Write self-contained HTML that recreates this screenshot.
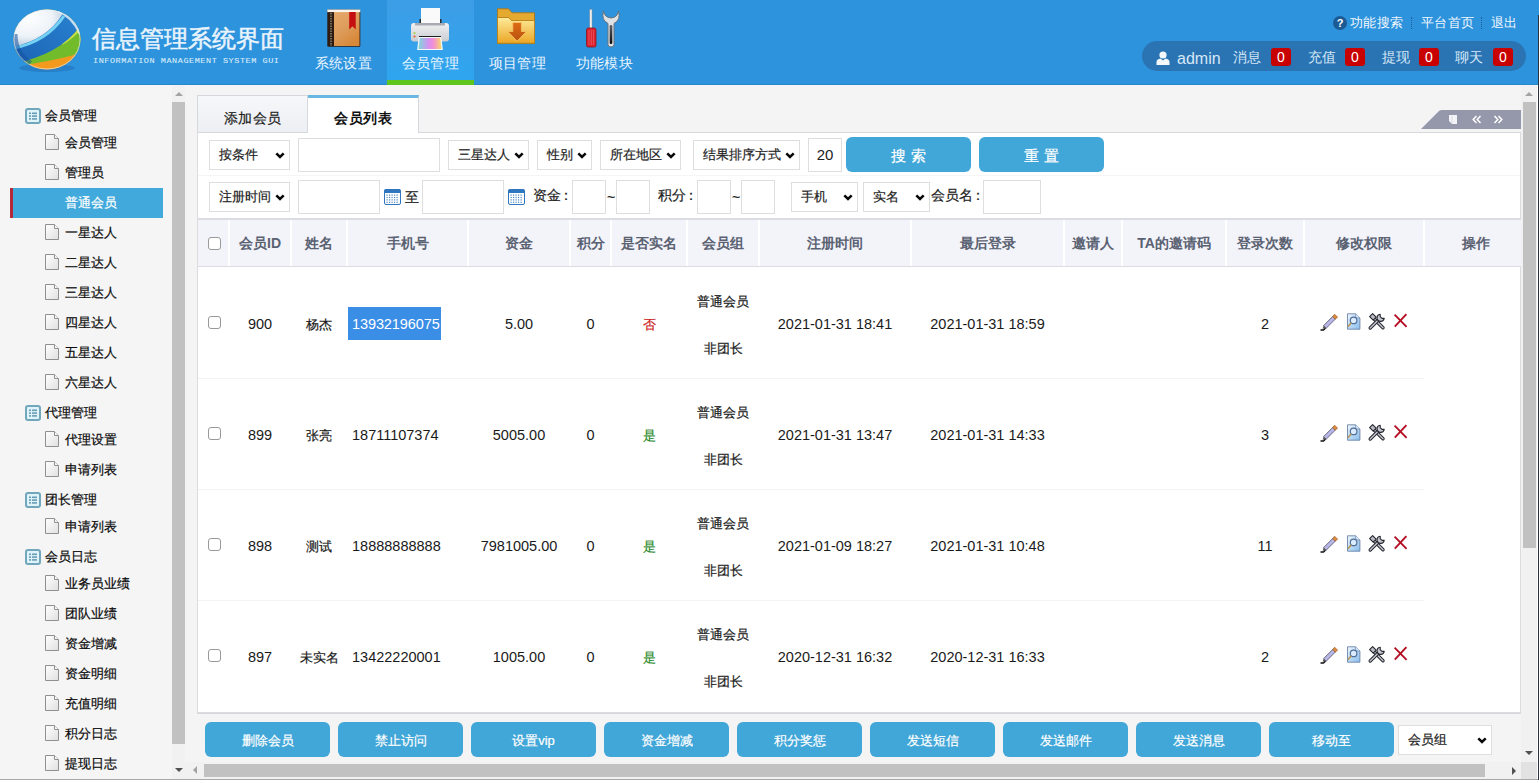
<!DOCTYPE html>
<html><head><meta charset="utf-8">
<style>
*{margin:0;padding:0;box-sizing:border-box}
html,body{width:1539px;height:783px;overflow:hidden;background:#fff;font-family:"Liberation Sans",sans-serif;color:#222}
.a{position:absolute}
.grp,.itm,.on2,.sel,.btn,.cj{-webkit-text-stroke:0.2px currentColor}
#hdr{left:0;top:0;width:1539px;height:85px;background:#2e93dd;border-bottom:1px solid #2a86cc}
.nav{top:0;width:87px;height:85px;text-align:center;color:#eaf6ff;font-size:14px;letter-spacing:0.4px}
.nav .lb{position:absolute;left:0;width:87px;top:55px;line-height:16px;white-space:nowrap}
.nav.on{background:linear-gradient(#3d9de6,#2ea6f0)}
.nav.on:after{content:"";position:absolute;left:0;bottom:0;width:87px;height:5px;background:#5ec51c}
.tl{top:14px;font-size:13px;letter-spacing:0.4px;line-height:18px;color:#f2f8fd;white-space:nowrap}
.pt{top:48px;font-size:14px;line-height:18px;color:#d6e8f6;white-space:nowrap}
.badge{top:48px;width:20px;height:18px;background:#c90000;border-radius:3px;color:#fff;font-size:14px;text-align:center;line-height:18px}
#side{left:0;top:85px;width:172px;height:694px;background:#f5f5f5}
.grp{position:absolute;left:25px;height:24px;font-size:13px;color:#0a0a0a;line-height:24px;padding-left:20px;white-space:nowrap}
.itm{position:absolute;left:45px;height:30px;font-size:13px;color:#0a0a0a;line-height:30px;padding-left:20px;white-space:nowrap}
.on2{position:absolute;left:10px;width:153px;height:30px;background:#41a9dc;border-left:3px solid #b22a3a;color:#fff;font-size:13px;line-height:30px;padding-left:52px}
#main{left:185px;top:85px;width:1352px;height:694px;background:#f4f4f4}
.sel{background:#fff;border:1px solid #dedede;font-size:13px;color:#222;padding-left:9px;white-space:nowrap}
.inp{background:#fff;border:1px solid #dedede;font-size:15px;color:#222;text-align:center}
.btn{background:#41a6d8;border-radius:6px;color:#fff;text-align:center}
.th{font-size:14px;font-weight:bold;color:#5a6272;text-align:center;line-height:47px;white-space:nowrap}
.td{font-size:14.5px;color:#1a1a1a;text-align:center;white-space:nowrap}
.cb{position:absolute;left:10px;width:13px;height:13px;border:1px solid #999;border-radius:3px;background:#fff}
</style></head>
<body>

<svg width="0" height="0" style="position:absolute">
<defs>
 <linearGradient id="dg" x1="0" y1="0" x2="1" y2="1"><stop offset="0" stop-color="#fff"/><stop offset="1" stop-color="#e0e0e0"/></linearGradient>
 <symbol id="doc" viewBox="0 0 15 16"><path d="M0.5 0.5 h9 l4 4 v11 h-13z" fill="url(#dg)" stroke="#909090" stroke-width="1"/><path d="M9.5 0.5 v4 h4" fill="#f8f8f8" stroke="#909090" stroke-width="1"/></symbol>
 <symbol id="grp" viewBox="0 0 16 16"><rect x="1" y="1" width="14" height="14" rx="2" fill="#def3fa" stroke="#72a6bc" stroke-width="2"/><rect x="4" y="4.5" width="2" height="1.6" fill="#6a9cb4"/><rect x="7" y="4.5" width="5" height="1.6" fill="#6a9cb4"/><rect x="4" y="7.3" width="2" height="1.6" fill="#6a9cb4"/><rect x="7" y="7.3" width="5" height="1.6" fill="#6a9cb4"/><rect x="4" y="10.1" width="2" height="1.6" fill="#6a9cb4"/><rect x="7" y="10.1" width="5" height="1.6" fill="#6a9cb4"/></symbol>
 <symbol id="chev" viewBox="0 0 10 7"><path d="M1.3 1.3 L5 5 L8.7 1.3" fill="none" stroke="#0a0a0a" stroke-width="2.5"/></symbol>
 <symbol id="cal" viewBox="0 0 17 17"><rect x="0.5" y="1.5" width="16" height="15" rx="1.5" fill="#fff" stroke="#2f76c0"/><rect x="0.5" y="1.5" width="16" height="3.5" fill="#2f76c0"/><rect x="2.5" y="6.5" width="1.2" height="1.2" fill="#4a86c4"/><rect x="5.0" y="6.5" width="1.2" height="1.2" fill="#4a86c4"/><rect x="7.5" y="6.5" width="1.2" height="1.2" fill="#4a86c4"/><rect x="10.0" y="6.5" width="1.2" height="1.2" fill="#4a86c4"/><rect x="12.5" y="6.5" width="1.2" height="1.2" fill="#4a86c4"/><rect x="2.5" y="8.9" width="1.2" height="1.2" fill="#4a86c4"/><rect x="5.0" y="8.9" width="1.2" height="1.2" fill="#4a86c4"/><rect x="7.5" y="8.9" width="1.2" height="1.2" fill="#4a86c4"/><rect x="10.0" y="8.9" width="1.2" height="1.2" fill="#4a86c4"/><rect x="12.5" y="8.9" width="1.2" height="1.2" fill="#4a86c4"/><rect x="2.5" y="11.3" width="1.2" height="1.2" fill="#4a86c4"/><rect x="5.0" y="11.3" width="1.2" height="1.2" fill="#4a86c4"/><rect x="7.5" y="11.3" width="1.2" height="1.2" fill="#4a86c4"/><rect x="10.0" y="11.3" width="1.2" height="1.2" fill="#4a86c4"/><rect x="12.5" y="11.3" width="1.2" height="1.2" fill="#4a86c4"/><rect x="2.5" y="13.7" width="1.2" height="1.2" fill="#4a86c4"/><rect x="5.0" y="13.7" width="1.2" height="1.2" fill="#4a86c4"/><rect x="7.5" y="13.7" width="1.2" height="1.2" fill="#4a86c4"/><rect x="10.0" y="13.7" width="1.2" height="1.2" fill="#4a86c4"/><rect x="12.5" y="13.7" width="1.2" height="1.2" fill="#4a86c4"/></symbol>
 <symbol id="icons" viewBox="0 0 90 18">
<defs><linearGradient id="dq" x1="0" y1="0" x2="1" y2="1"><stop offset="0" stop-color="#f2f8fe"/><stop offset="1" stop-color="#86bcec"/></linearGradient></defs>
<path d="M3.6 12.6 L13.2 3 L15.8 5.6 L6.2 15.2Z" fill="#b8b6e4" stroke="#4c4c6c" stroke-width="0.8"/>
<path d="M12.6 3.6 L14.6 1.2 L17.6 4.2 L15.2 6.2Z" fill="#de8a3c" stroke="#8a5020" stroke-width="0.6"/>
<path d="M3.6 12.6 L2.6 15.8 L6.2 15.2Z" fill="#606060"/>
<path d="M0.5 17 L3.5 17 L5.5 15.2" fill="none" stroke="#111" stroke-width="1.3"/>
<path d="M27.5 0.8 h8.2 l4.2 4.2 v11.2 h-12.4z" fill="url(#dq)" stroke="#6c84a8" stroke-width="0.9"/>
<path d="M35.7 0.8 v4.2 h4.2" fill="#dceafa" stroke="#6c84a8" stroke-width="0.7"/>
<circle cx="33.6" cy="7.4" r="3.3" fill="#dcecfc" stroke="#50709c" stroke-width="1.2"/>
<path d="M31.2 9.8 L28 13.8" stroke="#b89858" stroke-width="1.6"/>
<path d="M63 14.8 L53.5 5.3" stroke="#26262e" stroke-width="3.4" stroke-linecap="round"/>
<path d="M63 14.8 L53.5 5.3" stroke="#c4c6d0" stroke-width="1.4" stroke-linecap="round"/>
<path d="M49.6 3.6 L52.6 0.6 L56.2 4.2 L53.2 7.2z" fill="#b8bac4" stroke="#26262e" stroke-width="1.1" stroke-linejoin="round"/>
<path d="M50.2 15 L59 6.2" stroke="#26262e" stroke-width="3.4" stroke-linecap="round"/>
<path d="M50.2 15 L59 6.2" stroke="#c4c6d0" stroke-width="1.4" stroke-linecap="round"/>
<path d="M60.2 1.2 A3.6 3.6 0 1 0 64.2 5.4 L62 5.4 L60.2 3.6z" fill="#c4c6d0" stroke="#26262e" stroke-width="1.1" stroke-linejoin="round"/>
<path d="M74.6 1.6 L86.6 13.8" stroke="#b40e22" stroke-width="1.9"/>
<path d="M86.4 1.2 L74.8 13.6" stroke="#b40e22" stroke-width="1.9"/>
</symbol>
</defs>
</svg>

<div id="hdr" class="a">

  <svg class="a" style="left:0;top:0" width="90" height="80" viewBox="0 0 90 80">
    <defs>
      <clipPath id="gc"><ellipse cx="47" cy="39.5" rx="33.5" ry="30"/></clipPath>
      <radialGradient id="gw" cx="45%" cy="35%" r="65%"><stop offset="0" stop-color="#ffffff"/><stop offset="0.6" stop-color="#eef3f8"/><stop offset="1" stop-color="#b4c8dc"/></radialGradient>
      <linearGradient id="gb" x1="0" y1="1" x2="1" y2="0"><stop offset="0" stop-color="#1a5fb0"/><stop offset="1" stop-color="#2a86d4"/></linearGradient>
    </defs>
    <ellipse cx="47" cy="68" rx="28" ry="4" fill="#1f69b0" opacity=".45"/>
    <g clip-path="url(#gc)">
      <rect x="0" y="0" width="90" height="80" fill="#f39a1e"/>
      <path d="M0 68 Q55 62 90 50 V0 H0Z" fill="#72bc2c"/>
      <path d="M62 44 Q72 38 79 30" stroke="#c8e040" stroke-width="2" fill="none"/>
      <path d="M0 66 Q58 58 80 26 L75 0 H0Z" fill="url(#gb)"/>
      <path d="M8 49 Q45 44 64 16" stroke="#74d2f4" stroke-width="3" fill="none"/>
      <path d="M0 49 Q44 44 62 15 L60 0 H0Z" fill="url(#gw)"/>
      <path d="M14 34 Q14 54 30 64" stroke="#1450a0" stroke-width="7" fill="none" opacity=".55"/>
      <path d="M58 11 Q72 16 80 34" stroke="#e4eef6" stroke-width="2.5" fill="none" opacity=".8"/>
    </g>
    <ellipse cx="47" cy="39.5" rx="33" ry="29.5" fill="none" stroke="#e8f2fa" stroke-width="1" opacity=".6"/>
  </svg>
<div class="a" style="left:92px;top:23px;font-size:24px;line-height:32px;color:#e9f4fc;-webkit-text-stroke:0.5px #e9f4fc;white-space:nowrap">信息管理系统界面</div>
<div class="a" style="left:93px;top:57px;font-size:8.5px;line-height:9px;color:#d8ecfa;letter-spacing:0.55px;font-family:'Liberation Mono',monospace;white-space:nowrap;transform:scaleY(0.85);transform-origin:0 100%;-webkit-text-stroke:0.1px #d8ecfa">INFORMATION MANAGEMENT SYSTEM GUI</div>

  <div class="a nav" style="left:300px">
    <svg class="a" style="left:26px;top:8px" width="36" height="40" viewBox="0 0 36 40">
      <defs><linearGradient id="bk" x1="0" y1="0" x2="0.6" y2="1"><stop offset="0" stop-color="#e6aa6c"/><stop offset=".6" stop-color="#dc9a58"/><stop offset="1" stop-color="#d88838"/></linearGradient></defs>
      <rect x="1.3" y="1.5" width="33" height="37.3" rx="1" fill="#2e1c10"/>
      <rect x="8" y="4" width="25.5" height="34" fill="url(#bk)"/>
      <rect x="1.3" y="1.5" width="33" height="2.6" fill="#fbf4ec"/>
      <line x1="5" y1="5" x2="5" y2="38" stroke="#e4dcd0" stroke-width="0.8" stroke-dasharray="1.5 1"/>
      <path d="M23.2 4 h6.5 v17.5 l-3.25 -3.2 l-3.25 3.2z" fill="#c40e10"/>
    </svg>
    <div class="lb">系统设置</div>
  </div>
  <div class="a nav on" style="left:387px">
    <svg class="a" style="left:22px;top:6px" width="42" height="46" viewBox="0 0 42 46">
      <defs><linearGradient id="pr" x1="0" y1="0" x2="0" y2="1"><stop offset="0" stop-color="#f2f2f2"/><stop offset="1" stop-color="#c8ccd2"/></linearGradient>
      <linearGradient id="rb" x1="0" x2="1"><stop offset="0" stop-color="#78dcd8"/><stop offset=".45" stop-color="#d890f0"/><stop offset=".65" stop-color="#f490d0"/><stop offset="1" stop-color="#f8e060"/></linearGradient></defs>
      <rect x="10.5" y="13" width="22" height="5" fill="#2a2a2a"/>
      <rect x="12" y="2" width="19" height="15.5" fill="#fafafa"/>
      <rect x="2" y="17" width="38" height="18.5" rx="3" fill="url(#pr)"/>
      <rect x="6" y="17" width="30" height="2.5" fill="#a8acb2"/>
      <circle cx="5.5" cy="27" r="1.1" fill="#a8cc40"/><circle cx="5.5" cy="30.5" r="1.1" fill="#e06030"/>
      <rect x="10" y="30" width="22" height="1.8" fill="#1e1e1e"/>
      <path d="M10.2 31.5 L31.8 31.5 L33.2 43.5 L8.8 43.5Z" fill="url(#rb)" stroke="#f4f8fc" stroke-width="1.2"/>
    </svg>
    <div class="lb">会员管理</div>
  </div>
  <div class="a nav" style="left:474px">
    <svg class="a" style="left:22px;top:7px" width="42" height="40" viewBox="0 0 42 40">
      <defs><linearGradient id="fd" x1="0" y1="0" x2="0" y2="1"><stop offset="0" stop-color="#feea9a"/><stop offset="1" stop-color="#eba625"/></linearGradient>
      <linearGradient id="fa" x1="0" y1="0" x2="0" y2="1"><stop offset="0" stop-color="#de6c14"/><stop offset="1" stop-color="#b85010"/></linearGradient></defs>
      <path d="M1.5 1.8 h11 l3.5 4 h22.5 v30.5 h-37z" fill="#e4aa30" stroke="#a87618" stroke-width="0.9"/>
      <path d="M1.5 10.5 h11 l3 3 h23 v22.8 h-37z" fill="url(#fd)" stroke="#b88018" stroke-width="0.9"/>
      <path d="M16.8 15.5 h8.6 v9 h5 l-9.3 9.6 l-9.3 -9.6 h5z" fill="url(#fa)" stroke="#f6c868" stroke-width="0.8"/>
    </svg>
    <div class="lb">项目管理</div>
  </div>
  <div class="a nav" style="left:561px">
    <svg class="a" style="left:23px;top:8px" width="40" height="42" viewBox="0 0 40 42">
      <defs><linearGradient id="ws" x1="0" y1="0" x2="0" y2="1"><stop offset="0" stop-color="#5a6068"/><stop offset="1" stop-color="#0a0a0a"/></linearGradient></defs>
      <rect x="5.8" y="1.5" width="2.2" height="19" fill="#f2f2f2" stroke="#8a9098" stroke-width="0.5"/>
      <path d="M2.5 22 q0 -2 2 -2 h5.5 q2 0 2 2 v15.5 q0 1.5 -2 1.5 h-5.5 q-2 0 -2 -1.5z" fill="#dc2430" stroke="#8a1418" stroke-width="0.8"/>
      <path d="M5 22 v15 M7.3 22 v15 M9.6 22 v15" stroke="#f06068" stroke-width="0.7"/>
      <path d="M19.5 3 Q17 12 24 15.5 L24 36.5 Q24 39 27 39 Q30 39 30 36.5 L30 15.5 Q37 12 34.5 3 Q33.5 9.5 27 10 Q20.5 9.5 19.5 3Z" fill="#dde2e6" stroke="#6a727a" stroke-width="1"/>
      <rect x="25.7" y="17" width="2.6" height="19" rx="1.2" fill="url(#ws)"/>
    </svg>
    <div class="lb">功能模块</div>
  </div>
<div class="a" style="left:1333px;top:16px;width:14px;height:14px;border-radius:7px;background:#1c5a94;color:#fff;font-size:11px;font-weight:bold;text-align:center;line-height:14px">?</div>
<div class="a tl" style="left:1350px">功能搜索</div>
<div class="a" style="left:1411px;top:17px;width:1px;height:12px;border-left:1px dotted #1f5f99"></div>
<div class="a tl" style="left:1421px">平台首页</div>
<div class="a" style="left:1481px;top:17px;width:1px;height:12px;border-left:1px dotted #1f5f99"></div>
<div class="a tl" style="left:1491px">退出</div>
<div class="a" style="left:1142px;top:41px;width:384px;height:30px;border-radius:15px;background:#2a74b4"></div>
<svg class="a" style="left:1156px;top:51px" width="14" height="14" viewBox="0 0 14 14"><circle cx="7" cy="4" r="3.6" fill="#f4f8fb"/><path d="M0.5 14 v-3 q0 -3 4 -3.5 l2.5 2 l2.5 -2 q4 0.5 4 3.5 v3z" fill="#f4f8fb"/></svg>
<div class="a" style="left:1177px;top:49px;font-size:16px;line-height:20px;color:#d6e8f6">admin</div>
<div class="a pt" style="left:1233px">消息</div>
<div class="a pt" style="left:1308px">充值</div>
<div class="a pt" style="left:1382px">提现</div>
<div class="a pt" style="left:1455px">聊天</div>
<div class="a badge" style="left:1271px">0</div>
<div class="a badge" style="left:1345px">0</div>
<div class="a badge" style="left:1419px">0</div>
<div class="a badge" style="left:1493px">0</div>
</div>
<div id="side" class="a">
<div class="grp" style="top:19px"><svg class="a" style="left:0;top:4px" width="16" height="16"><use href="#grp"/></svg>会员管理</div>
<div class="itm" style="top:43px"><svg class="a" style="left:0;top:6px" width="15" height="16"><use href="#doc"/></svg>会员管理</div>
<div class="itm" style="top:73px"><svg class="a" style="left:0;top:6px" width="15" height="16"><use href="#doc"/></svg>管理员</div>
<div class="on2" style="top:103px">普通会员</div>
<div class="itm" style="top:133px"><svg class="a" style="left:0;top:6px" width="15" height="16"><use href="#doc"/></svg>一星达人</div>
<div class="itm" style="top:163px"><svg class="a" style="left:0;top:6px" width="15" height="16"><use href="#doc"/></svg>二星达人</div>
<div class="itm" style="top:193px"><svg class="a" style="left:0;top:6px" width="15" height="16"><use href="#doc"/></svg>三星达人</div>
<div class="itm" style="top:223px"><svg class="a" style="left:0;top:6px" width="15" height="16"><use href="#doc"/></svg>四星达人</div>
<div class="itm" style="top:253px"><svg class="a" style="left:0;top:6px" width="15" height="16"><use href="#doc"/></svg>五星达人</div>
<div class="itm" style="top:283px"><svg class="a" style="left:0;top:6px" width="15" height="16"><use href="#doc"/></svg>六星达人</div>
<div class="grp" style="top:316px"><svg class="a" style="left:0;top:4px" width="16" height="16"><use href="#grp"/></svg>代理管理</div>
<div class="itm" style="top:340px"><svg class="a" style="left:0;top:6px" width="15" height="16"><use href="#doc"/></svg>代理设置</div>
<div class="itm" style="top:370px"><svg class="a" style="left:0;top:6px" width="15" height="16"><use href="#doc"/></svg>申请列表</div>
<div class="grp" style="top:403px"><svg class="a" style="left:0;top:4px" width="16" height="16"><use href="#grp"/></svg>团长管理</div>
<div class="itm" style="top:427px"><svg class="a" style="left:0;top:6px" width="15" height="16"><use href="#doc"/></svg>申请列表</div>
<div class="grp" style="top:460px"><svg class="a" style="left:0;top:4px" width="16" height="16"><use href="#grp"/></svg>会员日志</div>
<div class="itm" style="top:484px"><svg class="a" style="left:0;top:6px" width="15" height="16"><use href="#doc"/></svg>业务员业绩</div>
<div class="itm" style="top:514px"><svg class="a" style="left:0;top:6px" width="15" height="16"><use href="#doc"/></svg>团队业绩</div>
<div class="itm" style="top:544px"><svg class="a" style="left:0;top:6px" width="15" height="16"><use href="#doc"/></svg>资金增减</div>
<div class="itm" style="top:574px"><svg class="a" style="left:0;top:6px" width="15" height="16"><use href="#doc"/></svg>资金明细</div>
<div class="itm" style="top:604px"><svg class="a" style="left:0;top:6px" width="15" height="16"><use href="#doc"/></svg>充值明细</div>
<div class="itm" style="top:634px"><svg class="a" style="left:0;top:6px" width="15" height="16"><use href="#doc"/></svg>积分日志</div>
<div class="itm" style="top:664px"><svg class="a" style="left:0;top:6px" width="15" height="16"><use href="#doc"/></svg>提现日志</div>
<div class="a" style="left:172px;top:0;width:13px;height:694px;background:#f1f1f1"></div>
<div class="a" style="left:172px;top:17px;width:13px;height:642px;background:#c1c1c1"></div>
<div class="a" style="left:175px;top:7px;width:0;height:0;border-left:4px solid transparent;border-right:4px solid transparent;border-bottom:4px solid #a3a3a3"></div>
<div class="a" style="left:175px;top:683px;width:0;height:0;border-left:4px solid transparent;border-right:4px solid transparent;border-top:4px solid #505050"></div>

</div>
<div id="main" class="a">
<div class="a" style="left:12px;top:10px;width:1324px;height:618px;background:#fff;border:1px solid #dcdce0;border-top:none"></div>
<div class="a" style="left:12px;top:10px;width:1324px;height:38px;background:#f4f4f5;border-bottom:1px solid #d8d8dc"></div>
<div class="a" style="left:12px;top:10px;width:111px;height:37px;background:linear-gradient(#f6f7f9,#eceff3);border:1px solid #d6d8de;border-bottom:none;font-size:14px;letter-spacing:0.5px;color:#222;text-align:center;line-height:44px;-webkit-text-stroke:0.2px #222">添加会员</div>
<div class="a" style="left:123px;top:10px;width:111px;height:38px;background:#fff;border-right:1px solid #d6d8de;border-top:3px solid #6ab8e2;font-size:14px;letter-spacing:0.5px;font-weight:bold;color:#111;text-align:center;line-height:40px">会员列表</div>
<svg class="a" style="left:1236px;top:25px" width="100" height="19" viewBox="0 0 100 19"><path d="M0 19 L18 1 Q19 0 21 0 H100 V19Z" fill="#9498aa"/><rect x="28" y="5" width="8" height="9" fill="#f4f4f8"/><path d="M28 11 l3 3 h-3z" fill="#9498aa"/><path d="M31 6 v7" stroke="#c8cad4" stroke-width="0.6"/><path d="M55.5 6 L52.2 9.5 L55.5 13 M59.5 6 L56.2 9.5 L59.5 13 M73.5 6 L76.8 9.5 L73.5 13 M77.5 6 L80.8 9.5 L77.5 13" fill="none" stroke="#fff" stroke-width="1.5"/></svg>
<div class="a" style="left:13px;top:90px;width:1322px;height:1px;background:#f5f5f5"></div>
<div class="a sel" style="left:24px;top:55px;width:81px;height:30px;line-height:28px">按条件<svg class="a" style="left:65px;top:11px" width="10" height="7"><use href="#chev"/></svg></div>
<div class="a inp" style="left:113px;top:53px;width:142px;height:34px;line-height:32px"></div>
<div class="a sel" style="left:263px;top:55px;width:81px;height:30px;line-height:28px">三星达人<svg class="a" style="left:65px;top:11px" width="10" height="7"><use href="#chev"/></svg></div>
<div class="a sel" style="left:352px;top:55px;width:55px;height:30px;line-height:28px">性别<svg class="a" style="left:39px;top:11px" width="10" height="7"><use href="#chev"/></svg></div>
<div class="a sel" style="left:415px;top:55px;width:81px;height:30px;line-height:28px">所在地区<svg class="a" style="left:65px;top:11px" width="10" height="7"><use href="#chev"/></svg></div>
<div class="a sel" style="left:508px;top:55px;width:107px;height:30px;line-height:28px">结果排序方式<svg class="a" style="left:91px;top:11px" width="10" height="7"><use href="#chev"/></svg></div>
<div class="a inp" style="left:623px;top:53px;width:34px;height:34px;line-height:32px">20</div>
<div class="a btn" style="left:661px;top:52px;width:125px;height:35px;font-size:15px;line-height:37px">搜 索</div>
<div class="a btn" style="left:794px;top:52px;width:125px;height:35px;font-size:15px;line-height:37px">重 置</div>
<div class="a sel" style="left:24px;top:97px;width:81px;height:30px;line-height:28px">注册时间<svg class="a" style="left:65px;top:11px" width="10" height="7"><use href="#chev"/></svg></div>
<div class="a inp" style="left:113px;top:95px;width:82px;height:34px;line-height:32px"></div>
<svg class="a" style="left:199px;top:103px" width="17" height="17"><use href="#cal"/></svg>
<div class="a cj" style="left:220px;top:103px;font-size:14px;color:#222;white-space:nowrap;line-height:18px;">至</div>
<div class="a inp" style="left:237px;top:95px;width:82px;height:34px;line-height:32px"></div>
<svg class="a" style="left:323px;top:103px" width="17" height="17"><use href="#cal"/></svg>
<div class="a cj" style="left:348px;top:101px;font-size:14px;color:#222;white-space:nowrap;line-height:18px;">资金<span style="margin-left:-2px">：</span></div>
<div class="a inp" style="left:387px;top:95px;width:34px;height:34px;line-height:32px"></div>
<div class="a cj" style="left:422px;top:103px;font-size:14px;color:#222;white-space:nowrap;line-height:18px;">~</div>
<div class="a inp" style="left:431px;top:95px;width:34px;height:34px;line-height:32px"></div>
<div class="a cj" style="left:473px;top:101px;font-size:14px;color:#222;white-space:nowrap;line-height:18px;">积分<span style="margin-left:-2px">：</span></div>
<div class="a inp" style="left:512px;top:95px;width:34px;height:34px;line-height:32px"></div>
<div class="a cj" style="left:547px;top:103px;font-size:14px;color:#222;white-space:nowrap;line-height:18px;">~</div>
<div class="a inp" style="left:556px;top:95px;width:34px;height:34px;line-height:32px"></div>
<div class="a sel" style="left:606px;top:97px;width:67px;height:30px;line-height:28px">手机<svg class="a" style="left:51px;top:11px" width="10" height="7"><use href="#chev"/></svg></div>
<div class="a sel" style="left:678px;top:97px;width:67px;height:30px;line-height:28px">实名<svg class="a" style="left:51px;top:11px" width="10" height="7"><use href="#chev"/></svg></div>
<div class="a cj" style="left:746px;top:101px;font-size:14px;color:#222;white-space:nowrap;line-height:18px;">会员名<span style="margin-left:-2px">：</span></div>
<div class="a inp" style="left:798px;top:95px;width:58px;height:34px;line-height:32px"></div>
<div class="a" style="left:13px;top:133px;width:1323px;height:2px;background:#dcdce2"></div>
<div class="a" style="left:13px;top:135px;width:1323px;height:47px;background:#f3f3fa;border-bottom:1px solid #dcdce2"></div>
<div class="a" style="left:13px;top:135px;width:31px;height:47px;"><div class="cb" style="top:17px"></div></div>
<div class="a" style="left:43px;top:135px;width:2px;height:46px;background:#fff"></div>
<div class="a th" style="left:44px;top:135px;width:62px;height:47px;">会员ID</div>
<div class="a" style="left:105px;top:135px;width:2px;height:46px;background:#fff"></div>
<div class="a th" style="left:106px;top:135px;width:56px;height:47px;">姓名</div>
<div class="a" style="left:161px;top:135px;width:2px;height:46px;background:#fff"></div>
<div class="a th" style="left:162px;top:135px;width:121px;height:47px;">手机号</div>
<div class="a" style="left:282px;top:135px;width:2px;height:46px;background:#fff"></div>
<div class="a th" style="left:283px;top:135px;width:102px;height:47px;">资金</div>
<div class="a" style="left:384px;top:135px;width:2px;height:46px;background:#fff"></div>
<div class="a th" style="left:385px;top:135px;width:41px;height:47px;">积分</div>
<div class="a" style="left:425px;top:135px;width:2px;height:46px;background:#fff"></div>
<div class="a th" style="left:426px;top:135px;width:76px;height:47px;">是否实名</div>
<div class="a" style="left:501px;top:135px;width:2px;height:46px;background:#fff"></div>
<div class="a th" style="left:502px;top:135px;width:72px;height:47px;">会员组</div>
<div class="a" style="left:573px;top:135px;width:2px;height:46px;background:#fff"></div>
<div class="a th" style="left:574px;top:135px;width:152px;height:47px;">注册时间</div>
<div class="a" style="left:725px;top:135px;width:2px;height:46px;background:#fff"></div>
<div class="a th" style="left:726px;top:135px;width:153px;height:47px;">最后登录</div>
<div class="a" style="left:878px;top:135px;width:2px;height:46px;background:#fff"></div>
<div class="a th" style="left:879px;top:135px;width:58px;height:47px;">邀请人</div>
<div class="a" style="left:936px;top:135px;width:2px;height:46px;background:#fff"></div>
<div class="a th" style="left:937px;top:135px;width:104px;height:47px;">TA的邀请码</div>
<div class="a" style="left:1040px;top:135px;width:2px;height:46px;background:#fff"></div>
<div class="a th" style="left:1041px;top:135px;width:78px;height:47px;">登录次数</div>
<div class="a" style="left:1118px;top:135px;width:2px;height:46px;background:#fff"></div>
<div class="a th" style="left:1119px;top:135px;width:120px;height:47px;">修改权限</div>
<div class="a" style="left:1238px;top:135px;width:2px;height:46px;background:#fff"></div>
<div class="a th" style="left:1239px;top:135px;width:103px;height:47px;">操作</div>
<div class="a" style="left:13px;top:183px;width:31px;height:110px;"><div class="cb" style="top:48px"></div></div>
<div class="a td" style="left:44px;top:183px;width:62px;height:110px;line-height:113px">900</div>
<div class="a td cj" style="left:106px;top:183px;width:56px;height:110px;line-height:113px;font-size:13px">杨杰</div>
<div class="a" style="left:162px;top:183px;width:121px;height:110px;"><div class="a" style="left:1px;top:39px;width:93px;height:33px;background:#3a8ee6;color:#fff;font-size:14.5px;line-height:35px;padding-left:4px;letter-spacing:-0.1px">13932196075</div></div>
<div class="a td" style="left:283px;top:183px;width:102px;height:110px;line-height:113px">5.00</div>
<div class="a td" style="left:385px;top:183px;width:41px;height:110px;line-height:113px">0</div>
<div class="a td cj" style="left:426px;top:183px;width:76px;height:110px;font-size:13px;color:#c22;line-height:113px">否</div>
<div class="a" style="left:502px;top:183px;width:72px;height:110px;font-size:13px;color:#1a1a1a;text-align:center"><div class="a cj" style="left:0;width:100%;top:25px;line-height:18px">普通会员</div><div class="a cj" style="left:0;width:100%;top:72px;line-height:18px">非团长</div></div>
<div class="a td" style="left:574px;top:183px;width:152px;height:110px;line-height:113px">2021-01-31 18:41</div>
<div class="a td" style="left:726px;top:183px;width:153px;height:110px;line-height:113px">2021-01-31 18:59</div>
<div class="a td" style="left:879px;top:183px;width:58px;height:110px;line-height:113px"></div>
<div class="a td" style="left:937px;top:183px;width:104px;height:110px;line-height:113px"></div>
<div class="a td" style="left:1041px;top:183px;width:78px;height:110px;line-height:113px">2</div>
<svg class="a" style="left:1135px;top:228px" width="90" height="18"><use href="#icons"/></svg>
<div class="a" style="left:13px;top:293px;width:1226px;height:1px;background:#f3f3f3"></div>
<div class="a" style="left:13px;top:294px;width:31px;height:110px;"><div class="cb" style="top:48px"></div></div>
<div class="a td" style="left:44px;top:294px;width:62px;height:110px;line-height:113px">899</div>
<div class="a td cj" style="left:106px;top:294px;width:56px;height:110px;line-height:113px;font-size:13px">张亮</div>
<div class="a td" style="left:162px;top:294px;width:121px;height:110px;line-height:113px;padding-left:5px;text-align:left;font-size:14.5px">18711107374</div>
<div class="a td" style="left:283px;top:294px;width:102px;height:110px;line-height:113px">5005.00</div>
<div class="a td" style="left:385px;top:294px;width:41px;height:110px;line-height:113px">0</div>
<div class="a td cj" style="left:426px;top:294px;width:76px;height:110px;font-size:13px;color:#2a8a2a;line-height:113px">是</div>
<div class="a" style="left:502px;top:294px;width:72px;height:110px;font-size:13px;color:#1a1a1a;text-align:center"><div class="a cj" style="left:0;width:100%;top:25px;line-height:18px">普通会员</div><div class="a cj" style="left:0;width:100%;top:72px;line-height:18px">非团长</div></div>
<div class="a td" style="left:574px;top:294px;width:152px;height:110px;line-height:113px">2021-01-31 13:47</div>
<div class="a td" style="left:726px;top:294px;width:153px;height:110px;line-height:113px">2021-01-31 14:33</div>
<div class="a td" style="left:879px;top:294px;width:58px;height:110px;line-height:113px"></div>
<div class="a td" style="left:937px;top:294px;width:104px;height:110px;line-height:113px"></div>
<div class="a td" style="left:1041px;top:294px;width:78px;height:110px;line-height:113px">3</div>
<svg class="a" style="left:1135px;top:339px" width="90" height="18"><use href="#icons"/></svg>
<div class="a" style="left:13px;top:404px;width:1226px;height:1px;background:#f3f3f3"></div>
<div class="a" style="left:13px;top:405px;width:31px;height:110px;"><div class="cb" style="top:48px"></div></div>
<div class="a td" style="left:44px;top:405px;width:62px;height:110px;line-height:113px">898</div>
<div class="a td cj" style="left:106px;top:405px;width:56px;height:110px;line-height:113px;font-size:13px">测试</div>
<div class="a td" style="left:162px;top:405px;width:121px;height:110px;line-height:113px;padding-left:5px;text-align:left;font-size:14.5px">18888888888</div>
<div class="a td" style="left:283px;top:405px;width:102px;height:110px;line-height:113px">7981005.00</div>
<div class="a td" style="left:385px;top:405px;width:41px;height:110px;line-height:113px">0</div>
<div class="a td cj" style="left:426px;top:405px;width:76px;height:110px;font-size:13px;color:#2a8a2a;line-height:113px">是</div>
<div class="a" style="left:502px;top:405px;width:72px;height:110px;font-size:13px;color:#1a1a1a;text-align:center"><div class="a cj" style="left:0;width:100%;top:25px;line-height:18px">普通会员</div><div class="a cj" style="left:0;width:100%;top:72px;line-height:18px">非团长</div></div>
<div class="a td" style="left:574px;top:405px;width:152px;height:110px;line-height:113px">2021-01-09 18:27</div>
<div class="a td" style="left:726px;top:405px;width:153px;height:110px;line-height:113px">2021-01-31 10:48</div>
<div class="a td" style="left:879px;top:405px;width:58px;height:110px;line-height:113px"></div>
<div class="a td" style="left:937px;top:405px;width:104px;height:110px;line-height:113px"></div>
<div class="a td" style="left:1041px;top:405px;width:78px;height:110px;line-height:113px">11</div>
<svg class="a" style="left:1135px;top:450px" width="90" height="18"><use href="#icons"/></svg>
<div class="a" style="left:13px;top:515px;width:1226px;height:1px;background:#f3f3f3"></div>
<div class="a" style="left:13px;top:516px;width:31px;height:110px;"><div class="cb" style="top:48px"></div></div>
<div class="a td" style="left:44px;top:516px;width:62px;height:110px;line-height:113px">897</div>
<div class="a td cj" style="left:106px;top:516px;width:56px;height:110px;line-height:113px;font-size:13px">未实名</div>
<div class="a td" style="left:162px;top:516px;width:121px;height:110px;line-height:113px;padding-left:5px;text-align:left;font-size:14.5px">13422220001</div>
<div class="a td" style="left:283px;top:516px;width:102px;height:110px;line-height:113px">1005.00</div>
<div class="a td" style="left:385px;top:516px;width:41px;height:110px;line-height:113px">0</div>
<div class="a td cj" style="left:426px;top:516px;width:76px;height:110px;font-size:13px;color:#2a8a2a;line-height:113px">是</div>
<div class="a" style="left:502px;top:516px;width:72px;height:110px;font-size:13px;color:#1a1a1a;text-align:center"><div class="a cj" style="left:0;width:100%;top:25px;line-height:18px">普通会员</div><div class="a cj" style="left:0;width:100%;top:72px;line-height:18px">非团长</div></div>
<div class="a td" style="left:574px;top:516px;width:152px;height:110px;line-height:113px">2020-12-31 16:32</div>
<div class="a td" style="left:726px;top:516px;width:153px;height:110px;line-height:113px">2020-12-31 16:33</div>
<div class="a td" style="left:879px;top:516px;width:58px;height:110px;line-height:113px"></div>
<div class="a td" style="left:937px;top:516px;width:104px;height:110px;line-height:113px"></div>
<div class="a td" style="left:1041px;top:516px;width:78px;height:110px;line-height:113px">2</div>
<svg class="a" style="left:1135px;top:561px" width="90" height="18"><use href="#icons"/></svg>
<div class="a" style="left:12px;top:628px;width:1325px;height:1px;background:#d8d8dc"></div>
<div class="a btn" style="left:20px;top:637px;width:125px;height:35px;font-size:13px;line-height:37px">删除会员</div>
<div class="a btn" style="left:153px;top:637px;width:125px;height:35px;font-size:13px;line-height:37px">禁止访问</div>
<div class="a btn" style="left:286px;top:637px;width:125px;height:35px;font-size:13px;line-height:37px">设置vip</div>
<div class="a btn" style="left:419px;top:637px;width:125px;height:35px;font-size:13px;line-height:37px">资金增减</div>
<div class="a btn" style="left:552px;top:637px;width:125px;height:35px;font-size:13px;line-height:37px">积分奖惩</div>
<div class="a btn" style="left:685px;top:637px;width:125px;height:35px;font-size:13px;line-height:37px">发送短信</div>
<div class="a btn" style="left:818px;top:637px;width:125px;height:35px;font-size:13px;line-height:37px">发送邮件</div>
<div class="a btn" style="left:951px;top:637px;width:125px;height:35px;font-size:13px;line-height:37px">发送消息</div>
<div class="a btn" style="left:1084px;top:637px;width:125px;height:35px;font-size:13px;line-height:37px">移动至</div>
<div class="a sel" style="left:1213px;top:640px;width:94px;height:30px;line-height:28px">会员组<svg class="a" style="left:78px;top:11px" width="10" height="7"><use href="#chev"/></svg></div>
<div class="a" style="left:0px;top:677px;width:1336px;height:17px;background:#f1f1f1"></div>
<div class="a" style="left:19px;top:679px;width:1281px;height:13px;background:#c1c1c1"></div>
<div class="a" style="left:8px;top:681px;width:0px;height:0px;border-top:4px solid transparent;border-bottom:4px solid transparent;border-right:4px solid #a3a3a3"></div>
<div class="a" style="left:1327px;top:682px;width:0px;height:0px;border-top:4px solid transparent;border-bottom:4px solid transparent;border-left:4px solid #505050"></div>
<div class="a" style="left:1336px;top:0px;width:16px;height:677px;background:#f1f1f1"></div>
<div class="a" style="left:1338px;top:17px;width:13px;height:446px;background:#c1c1c1"></div>
<div class="a" style="left:1340px;top:7px;width:0px;height:0px;border-left:4px solid transparent;border-right:4px solid transparent;border-bottom:4px solid #a3a3a3"></div>
<div class="a" style="left:1340px;top:666px;width:0px;height:0px;border-left:4px solid transparent;border-right:4px solid transparent;border-top:4px solid #505050"></div>
<div class="a" style="left:1336px;top:677px;width:16px;height:17px;background:#e2e2e2"></div>
</div>
<div class="a" style="left:0;top:779px;width:1539px;height:1px;background:#a8a8a8"></div>
<div class="a" style="left:1538px;top:15px;width:1px;height:765px;background:#2a3240"></div>
</body></html>
